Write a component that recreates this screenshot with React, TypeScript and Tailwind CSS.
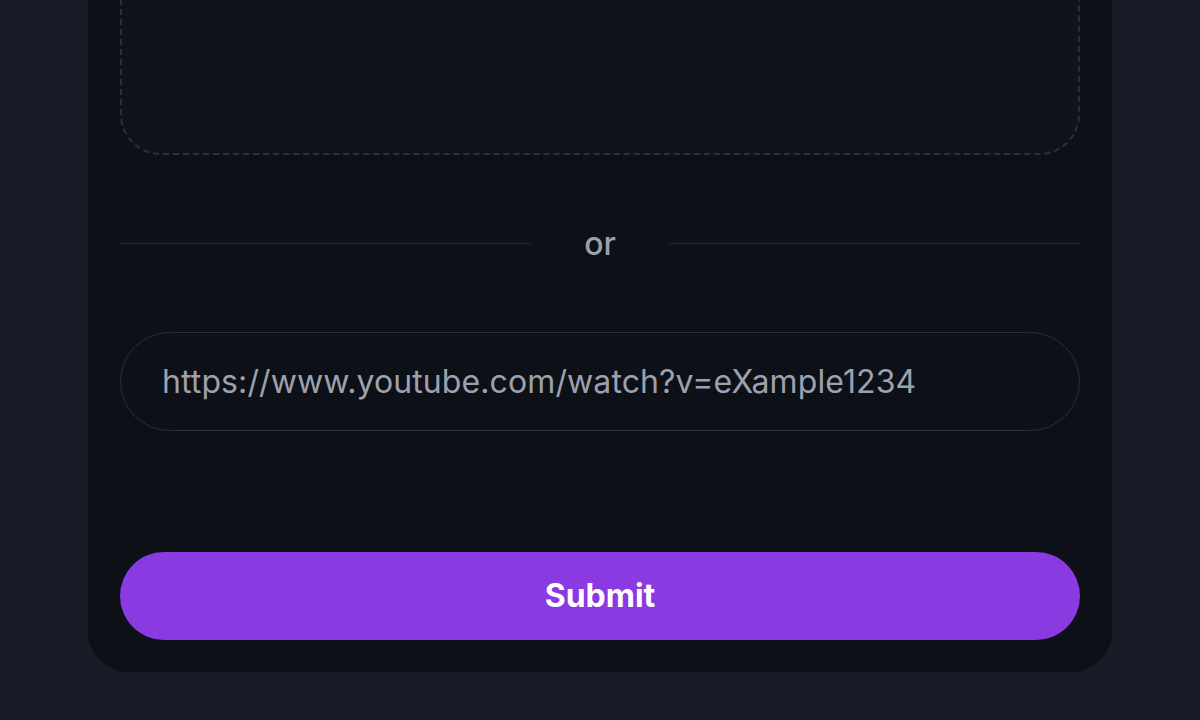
export default function App() {
  return (
    <div
      className="h-[720px] w-[1200px] overflow-hidden bg-[#181c27] flex flex-col justify-end items-center pb-12"
      style={{ fontFamily: 'Inter, "Noto Sans", sans-serif' }}
    >
      <div className="w-[1024px] shrink-0 rounded-[40px] bg-[#0d1017] px-8 pt-8 pb-8 flex flex-col">
        {/* Drop zone */}
        <div className="h-[420px] rounded-[40px] border-2 border-dashed border-[#2a2f3b] bg-[#10131b]"></div>

        {/* Divider */}
        <div className="mt-[71px] flex items-center gap-[53px] h-[34px]">
          <div className="flex-1 h-px bg-[#262a35]"></div>
          <span className="text-[32px] font-medium text-[#9ca1ad] leading-none pt-[2px]">or</span>
          <div className="flex-1 h-px bg-[#262a35]"></div>
        </div>

        {/* URL input */}
        <input
          type="text"
          placeholder="https://www.youtube.com/watch?v=eXample1234"
          className="mt-[72px] h-[99px] w-full rounded-full border border-[#2a2e3a] bg-transparent px-[41px] text-[32px] tracking-[0.1px] text-[#9ca1ad] placeholder:text-[#9ca1ad] outline-none"
        />

        {/* Submit */}
        <button
          type="submit"
          className="mt-[121px] h-[88px] w-full rounded-full bg-[#8a3ae0] text-[32px] font-bold text-white"
        >
          Submit
        </button>
      </div>
    </div>
  );
}
